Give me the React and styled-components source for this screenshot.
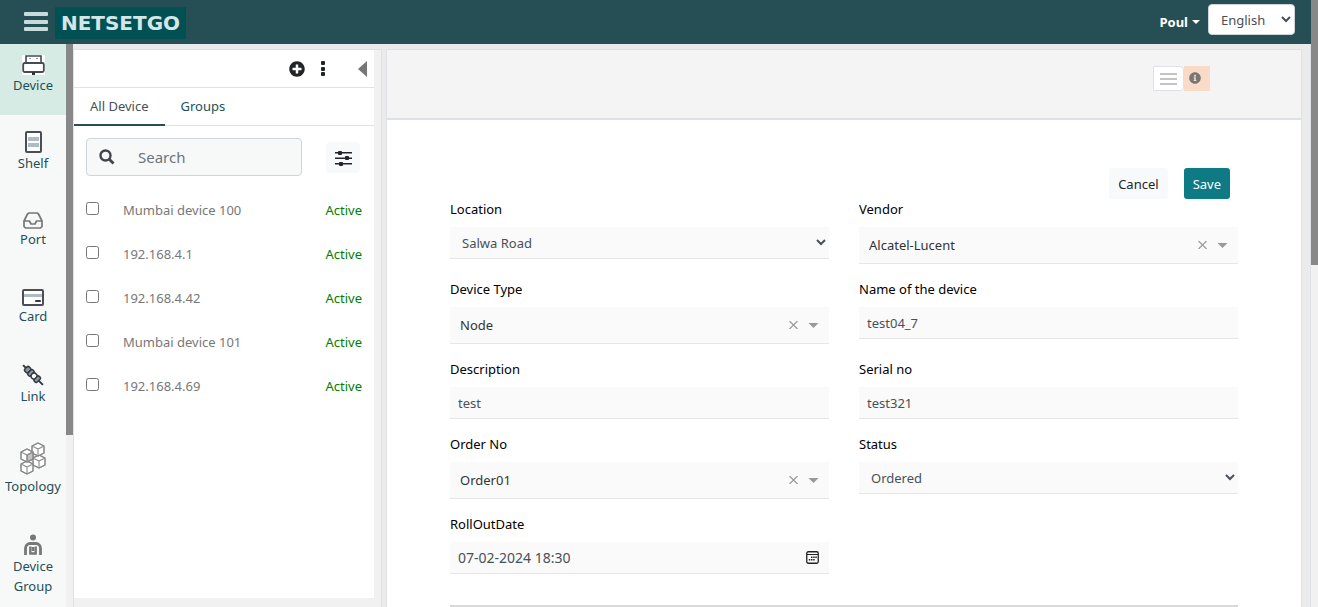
import React from "react";
import styled, { createGlobalStyle } from "styled-components";
import { FaPlusCircle, FaInfoCircle } from "react-icons/fa";

const GlobalStyle = createGlobalStyle`
  *, *::before, *::after { box-sizing: border-box; }
  body {
    margin: 0;
    background: #ebebeb;
    color: #212529;
    font: 13px/20px "Noto Sans", "Open Sans", sans-serif;
  }
  button, input, select { font: inherit; margin: 0; }
  button { cursor: pointer; }
  ul { list-style: none; margin: 0; padding: 0; }
  svg { display: block; flex: none; }
`;

const Shell = styled.div`
  display: flex;
  height: 100vh;
  overflow: hidden;
`;

const Track = styled.div`
  flex: none;
  width: 7px;
  background: #f1f1f1;
`;

const Thumb = styled.div`
  height: ${(p) => p.$size};
  background: #888;
`;

const Page = styled.div`
  flex: 1;
  min-width: 0;
  display: flex;
  flex-direction: column;
`;

const Header = styled.header`
  flex: none;
  display: flex;
  align-items: center;
  height: 44px;
  padding: 0 16px 0 24px;
  background: #254f55;
`;

const IconButton = styled.button`
  display: flex;
  align-items: center;
  justify-content: center;
  padding: 0;
  border: 0;
  background: none;
  color: ${(p) => p.$color || "#212529"};
`;

const Logo = styled.a`
  display: flex;
  align-items: center;
  justify-content: center;
  width: 131px;
  height: 32px;
  margin: 2px auto 0 7px;
  background: #005054;
  color: #d5e6e6;
  font: bold 20px/32px "DejaVu Sans", sans-serif;
  text-decoration: none;
`;

const UserMenu = styled.button`
  display: flex;
  align-items: center;
  gap: 4px;
  margin-right: 8px;
  padding: 0;
  border: 0;
  background: none;
  color: #fff;
  font-weight: 700;
`;

const Language = styled.select`
  align-self: flex-start;
  width: 87px;
  height: 31px;
  margin-top: 4px;
  padding: 0 0 0 8px;
  border: 1px solid #ced4da;
  border-radius: 4px;
  background: #fff;
  color: #495057;
`;

const Body = styled.div`
  flex: 1;
  min-height: 0;
  display: flex;
  border-right: 1px solid #dee2e6;
`;

const Sidebar = styled.nav`
  flex: none;
  width: 66px;
  overflow: hidden;
  background: #f7f9f9;
`;

const NavLink = styled.a`
  display: flex;
  flex-direction: column;
  align-items: center;
  padding: ${(p) => (p.$active ? "10px" : "16px")} 4px 20px;
  background: ${(p) => (p.$active ? "#d6ebe4" : "transparent")};
  color: #254f55;
  text-align: center;
  text-decoration: none;
`;

const NavIcon = styled.span`
  display: flex;
  align-items: flex-end;
  height: ${(p) => p.$height}px;
`;

const DevicePanel = styled.aside`
  flex: none;
  display: flex;
  width: 309px;
  margin-top: 5px;
  border: 1px solid #dee2e6;
  border-bottom: 0;
  background: #fff;
`;

const DeviceContent = styled.div`
  flex: 1;
  display: flex;
  flex-direction: column;
`;

const PanelTools = styled.div`
  display: flex;
  align-items: center;
  justify-content: flex-end;
  height: 38px;
  padding-right: 6px;
  border-bottom: 1px solid #dee2e6;
`;

const ToolGroup = styled.div`
  display: flex;
  gap: 15px;
  margin-right: 32px;
`;

const Tabs = styled.div`
  display: flex;
  height: 38px;
  border-bottom: 1px solid #dee2e6;
`;

const Tab = styled.button`
  height: 38px;
  padding: 0 16px;
  border: 0;
  border-bottom: 2px solid ${(p) => (p.$active ? "#254f55" : "transparent")};
  background: none;
  color: ${(p) => (p.$active ? "#495057" : "#254f55")};
`;

const SearchRow = styled.div`
  display: flex;
  align-items: center;
  justify-content: space-between;
  padding: 12px 14px 12px 12px;
`;

const SearchBox = styled.label`
  display: flex;
  align-items: center;
  gap: 23px;
  width: 216px;
  height: 38px;
  padding-left: 12px;
  border: 1px solid #ced4da;
  border-radius: 4px;
  background: #f7f9f9;
`;

const SearchInput = styled.input`
  flex: 1;
  min-width: 0;
  padding: 0;
  border: 0;
  outline: 0;
  background: none;
  font-size: 15px;
  &::placeholder { color: #6c757d; }
`;

const FilterButton = styled(IconButton)`
  width: 34px;
  height: 31px;
  padding-top: 2px;
  border-radius: 4px;
  background: #f8f9fa;
`;

const DeviceRow = styled.label`
  display: flex;
  align-items: center;
  height: 44px;
  padding: 0 12px;
  color: #777;
`;

const Check = styled.input`
  width: 13px;
  height: 13px;
  margin: 0 24px 4px 0;
`;

const State = styled.span`
  margin-left: auto;
  color: green;
`;

const BottomTrack = styled.div`
  height: 9px;
  margin-top: auto;
  background: #f1f1f1;
`;

const Main = styled.main`
  flex: 1;
  min-width: 0;
  margin: 5px 8px 0 4px;
  border: 1px solid #dee2e6;
  border-bottom: 0;
  background: #fff;
`;

const MainHeader = styled.div`
  display: flex;
  justify-content: flex-end;
  height: 70px;
  padding: 16px 91px 0 0;
  border-bottom: 2px solid #dee2e6;
  background: #f4f4f4;
`;

const ListButton = styled(IconButton)`
  width: 31px;
  height: 25px;
  border: 1px solid #dee2e6;
  border-radius: 0 4px 4px 0;
  background: #fff;
`;

const InfoButton = styled(IconButton)`
  width: 26px;
  height: 25px;
  padding: 0 4px 2px 0;
  background: #fadbc8;
`;

const Form = styled.form`
  padding: 48px 63px 0;
`;

const Actions = styled.div`
  display: flex;
  justify-content: flex-end;
  gap: 16px;
  padding-right: 8px;
`;

const ActionButton = styled.button`
  height: 31px;
  padding: 0 9px;
  border: 0;
  border-radius: 3px;
  background: ${(p) => (p.$primary ? "#0d7a84" : "#f8f9fa")};
  color: ${(p) => (p.$primary ? "#fff" : "#212529")};
`;

const Fields = styled.div`
  display: grid;
  grid-template-columns: 1fr 1fr;
  gap: 15px 30px;
  padding-bottom: 31px;
  border-bottom: 2px solid #d9d9d9;
`;

const Field = styled.div`
  display: flex;
  flex-direction: column;
  gap: 8px;
  min-width: 0;
`;

const Label = styled.label`
  color: #000;
`;

const Control = styled.div`
  display: flex;
  align-items: center;
  height: ${(p) => (p.$tall ? 37 : 32)}px;
  border-bottom: 1px solid #e6e6e6;
  background: #fafafa;
`;

const TextInput = styled.input`
  flex: 1;
  min-width: 0;
  height: 100%;
  padding: 0 8px;
  border: 0;
  outline: 0;
  background: none;
  color: #495057;
`;

const DateInput = styled(TextInput)`
  font-size: 14px;
`;

const ComboInput = styled(TextInput)`
  padding: 0 10px;
  color: #333;
`;

const SelectInput = styled.select`
  width: 100%;
  height: 100%;
  padding: 0 0 0 8px;
  border: 0;
  background: #fafafa;
  color: #495057;
`;

const ComboButtons = styled.div`
  display: flex;
  align-items: center;
  gap: 10px;
  padding-right: 10px;
`;

const Caret = ({ width, height }) => (
  <svg width={width} height={height} viewBox="0 0 10 5" fill="currentColor" aria-hidden="true">
    <path d="M0 0h10L5 5z" />
  </svg>
);

const MenuIcon = () => (
  <svg width="24" height="20" viewBox="0 0 24 20" fill="#c8dadb">
    <rect y="0" width="24" height="4" rx="1" />
    <rect y="8" width="24" height="4" rx="1" />
    <rect y="15" width="24" height="4" rx="1" />
  </svg>
);

const DeviceIcon = () => (
  <svg width="23" height="20" viewBox="0 0 23 20">
    <path fill="#fff" d="M0 0h23v20H0z" />
    <path fill="#fff" stroke="#454b52" strokeWidth="1.6" d="M4 8V1h15v7" />
    <rect x="1.200" y="8" width="20.600" height="9" rx="1.500" fill="#fff" stroke="#454b52" strokeWidth="1.800" />
    <path fill="#999" d="M7 3h2v1H7zM14 3h2v1h-2z" />
    <path fill="#333" d="M10 17h3v3h-3z" />
  </svg>
);

const ShelfIcon = () => (
  <svg width="17" height="22" viewBox="0 0 17 22">
    <rect x="1" y="1" width="15" height="20" rx="1" fill="#fff" stroke="#4a4f56" strokeWidth="2" />
    <path fill="#b1bbc6" d="M3 6h11v4H3zM3 12h11v4H3z" />
  </svg>
);

const PortIcon = () => (
  <svg width="20" height="17" viewBox="0 0 20 17" fill="none" stroke="#777" strokeWidth="1.7" strokeLinejoin="round">
    <path d="M1 9l3.500-7L6 1h8l1.500 1L19 9v5.500L17.500 16h-15L1 14.500z" />
    <path d="M1 9h5.500l1.500 3h4l1.500-3H19" />
  </svg>
);

const CardIcon = () => (
  <svg width="22" height="17" viewBox="0 0 22 17">
    <rect x="1" y="1" width="20" height="15" rx="1" fill="#fff" stroke="#4a4f56" strokeWidth="2" />
    <path fill="#b1bbc6" d="M2 5h18v3H2z" />
    <rect x="13" y="11" width="6" height="2" rx="1" fill="#343a40" />
  </svg>
);

const LinkIcon = () => (
  <svg width="22" height="22" viewBox="0 0 22 22">
    <g transform="rotate(45 11 11)" stroke="#343a40" strokeWidth="1.500">
      <path d="M-3 11h28" strokeWidth="2" />
      <rect x="1" y="8" width="5" height="6" rx="1.500" fill="#8998a8" />
      <rect x="6" y="7.500" width="4" height="7" rx="1.500" fill="#8998a8" />
      <circle cx="12.500" cy="11" r="3" fill="#fff" />
      <rect x="15" y="7.500" width="4" height="7" rx="1.500" fill="#8998a8" />
    </g>
  </svg>
);

const Cube = ({ x, y, shaded }) => (
  <g transform={`translate(${x} ${y})`}>
    <path fill="#fff" d="M6 0l6 3v7l-6 3-6-3V3z" />
    {shaded && <path fill="#c4c4c4" d="M12 3v7l-6 3V6z" />}
    <path d="M6 0l6 3v7l-6 3-6-3V3zM0 3l6 3 6-3M6 6v7" />
  </g>
);

const TopologyIcon = () => (
  <svg width="26" height="34" viewBox="0 0 26 34" fill="none" stroke="#8b8b8b" strokeWidth="1.100" strokeLinejoin="round">
    <Cube x={13} y={13} />
    <Cube x={12} y={1} />
    <Cube x={1} y={19} />
    <Cube x={1} y={7} shaded />
  </svg>
);

const GroupIcon = () => (
  <svg width="18" height="22" viewBox="0 0 18 22" fill="none" stroke="#777" strokeWidth="2.800">
    <circle cx="9" cy="3.500" r="3" fill="#777" stroke="none" />
    <path d="M1.500 21v-6.500c0-3 2-5 4.500-5h6c2.500 0 4.500 2 4.500 5V21" />
    <path d="M6.300 12.500v7h5.400v-7M9 13v4" strokeWidth="2.400" />
  </svg>
);

const DotsIcon = () => (
  <svg width="6" height="16" viewBox="0 0 6 16" fill="#212529">
    <rect x="1" y="0" width="4" height="4" rx="1" />
    <rect x="1" y="6" width="4" height="4" rx="1" />
    <rect x="1" y="11" width="4" height="4" rx="1" />
  </svg>
);

const CollapseIcon = () => (
  <svg width="10" height="16" viewBox="0 0 10 16" fill="#777">
    <path d="M9 0v16L0 8z" />
  </svg>
);

const SearchIcon = () => (
  <svg width="16" height="16" viewBox="0 0 16 16" fill="none" stroke="#40464c">
    <circle cx="6.500" cy="6.500" r="5" strokeWidth="2.400" />
    <path d="M10 10l4.500 4.500" strokeWidth="2.800" />
  </svg>
);

const FilterIcon = () => (
  <svg width="17" height="16" viewBox="0 0 17 16" fill="#212529">
    <path d="M0 2h17v1.500H0zM0 7.500h17V9H0zM0 13h17v1.500H0z" />
    <rect x="3" y="1" width="4" height="4" rx="1" />
    <rect x="10" y="6" width="4" height="4" rx="1" />
    <rect x="4" y="12" width="4" height="4" rx="1" />
  </svg>
);

const ListIcon = () => (
  <svg width="17" height="12" viewBox="0 0 17 12" fill="#c4c4c4">
    <path d="M0 0h17v2H0zM0 5h17v2H0zM0 10h17v2H0z" />
  </svg>
);

const ClearIcon = () => (
  <svg width="9" height="8" viewBox="0 0 9 8" fill="none" stroke="#999" strokeWidth="1.200">
    <path d="M.5 0l8 8M8.500 0l-8 8" />
  </svg>
);

const CalendarIcon = () => (
  <svg width="13" height="13" viewBox="0 0 13 13">
    <rect x=".75" y=".75" width="11.500" height="11.500" rx="1.500" fill="none" stroke="#222" strokeWidth="1.300" />
    <path fill="#222" d="M1 3h11v1H1zM5 5.500h1.500V7H5zM7.200 5.500h1.500V7H7.200zM9.300 5.500h1.500V7H9.300zM2.800 8h1.500v1.500H2.800zM5 8h1.500v1.500H5zM7.200 8h1.500v1.500H7.200z" />
  </svg>
);

const NAV = [
  { label: "Device", Icon: DeviceIcon, height: 21, active: true },
  { label: "Shelf", Icon: ShelfIcon, height: 22 },
  { label: "Port", Icon: PortIcon, height: 20 },
  { label: "Card", Icon: CardIcon, height: 21 },
  { label: "Link", Icon: LinkIcon, height: 24 },
  { label: "Topology", Icon: TopologyIcon, height: 34 },
  { label: "Device Group", Icon: GroupIcon, height: 24 },
];

const DEVICES = [
  "Mumbai device 100",
  "192.168.4.1",
  "192.168.4.42",
  "Mumbai device 101",
  "192.168.4.69",
];

const FIELDS = [
  { id: "location", label: "Location", kind: "select", value: "Salwa Road" },
  { id: "vendor", label: "Vendor", kind: "combo", value: "Alcatel-Lucent" },
  { id: "type", label: "Device Type", kind: "combo", value: "Node" },
  { id: "name", label: "Name of the device", kind: "text", value: "test04_7" },
  { id: "description", label: "Description", kind: "text", value: "test" },
  { id: "serial", label: "Serial no", kind: "text", value: "test321" },
  { id: "order", label: "Order No", kind: "combo", value: "Order01" },
  { id: "status", label: "Status", kind: "select", value: "Ordered" },
  { id: "rollout", label: "RollOutDate", kind: "date", value: "07-02-2024 18:30" },
];

const FieldControl = ({ id, label, kind, value }) => {
  if (kind === "select") {
    return (
      <Control>
        <SelectInput id={id} defaultValue={value}>
          <option>{value}</option>
        </SelectInput>
      </Control>
    );
  }
  if (kind === "combo") {
    return (
      <Control $tall>
        <ComboInput id={id} role="combobox" aria-expanded="false" defaultValue={value} />
        <ComboButtons>
          <IconButton type="button" aria-label={`Clear ${label}`}><ClearIcon /></IconButton>
          <IconButton type="button" aria-label={`Open ${label}`} $color="#999"><Caret width={11} height={5} /></IconButton>
        </ComboButtons>
      </Control>
    );
  }
  if (kind === "date") {
    return (
      <Control>
        <DateInput id={id} type="text" defaultValue={value} />
        <ComboButtons>
          <IconButton type="button" aria-label="Choose date"><CalendarIcon /></IconButton>
        </ComboButtons>
      </Control>
    );
  }
  return (
    <Control>
      <TextInput id={id} type="text" defaultValue={value} />
    </Control>
  );
};

export default function App() {
  return (
    <Shell>
      <GlobalStyle />
      <Page>
        <Header>
          <IconButton type="button" aria-label="Menu"><MenuIcon /></IconButton>
          <Logo href="#home">NETSETGO</Logo>
          <UserMenu type="button">Poul <Caret width={8} height={4} /></UserMenu>
          <Language aria-label="Language" defaultValue="English">
            <option>English</option>
          </Language>
        </Header>
        <Body>
          <Sidebar>
            {NAV.map(({ label, Icon, height, active }) => (
              <NavLink key={label} href="#nav" $active={active}>
                <NavIcon $height={height}><Icon /></NavIcon>
                {label}
              </NavLink>
            ))}
          </Sidebar>
          <Track><Thumb $size="69.4%" /></Track>
          <DevicePanel>
            <DeviceContent>
              <PanelTools>
                <ToolGroup>
                  <IconButton type="button" aria-label="Add device"><FaPlusCircle size={16} /></IconButton>
                  <IconButton type="button" aria-label="More"><DotsIcon /></IconButton>
                </ToolGroup>
                <IconButton type="button" aria-label="Collapse"><CollapseIcon /></IconButton>
              </PanelTools>
              <Tabs role="tablist">
                <Tab type="button" role="tab" aria-selected="true" $active>All Device</Tab>
                <Tab type="button" role="tab" aria-selected="false">Groups</Tab>
              </Tabs>
              <SearchRow>
                <SearchBox>
                  <SearchIcon />
                  <SearchInput type="text" placeholder="Search" aria-label="Search" />
                </SearchBox>
                <FilterButton type="button" aria-label="Filter"><FilterIcon /></FilterButton>
              </SearchRow>
              <ul>
                {DEVICES.map((name) => (
                  <li key={name}>
                    <DeviceRow>
                      <Check type="checkbox" />
                      {name}
                      <State>Active</State>
                    </DeviceRow>
                  </li>
                ))}
              </ul>
              <BottomTrack />
            </DeviceContent>
            <Track />
          </DevicePanel>
          <Main>
            <MainHeader>
              <ListButton type="button" aria-label="List"><ListIcon /></ListButton>
              <InfoButton type="button" aria-label="Information" $color="#777"><FaInfoCircle size={12} /></InfoButton>
            </MainHeader>
            <Form>
              <Actions>
                <ActionButton type="button">Cancel</ActionButton>
                <ActionButton type="button" $primary>Save</ActionButton>
              </Actions>
              <Fields>
                {FIELDS.map((field) => (
                  <Field key={field.id}>
                    <Label htmlFor={field.id}>{field.label}</Label>
                    <FieldControl {...field} />
                  </Field>
                ))}
              </Fields>
            </Form>
          </Main>
        </Body>
      </Page>
      <Track><Thumb $size="43.7%" /></Track>
    </Shell>
  );
}
